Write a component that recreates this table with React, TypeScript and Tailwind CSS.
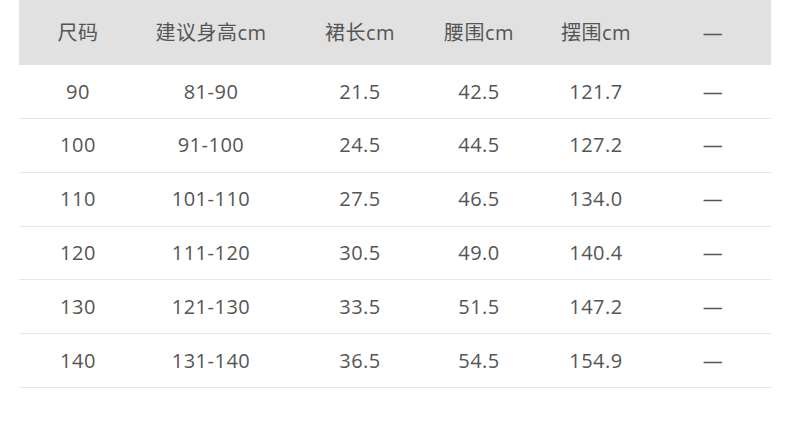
const headers = ["尺码", "建议身高cm", "裙长cm", "腰围cm", "摆围cm", "—"];

const rows = [
	["90", "81-90", "21.5", "42.5", "121.7", "—"],
	["100", "91-100", "24.5", "44.5", "127.2", "—"],
	["110", "101-110", "27.5", "46.5", "134.0", "—"],
	["120", "111-120", "30.5", "49.0", "140.4", "—"],
	["130", "121-130", "33.5", "51.5", "147.2", "—"],
	["140", "131-140", "36.5", "54.5", "154.9", "—"],
];

const gridCols = "grid grid-cols-[118px_148px_150px_88px_146px_88px]";

export default function App() {
	return (
		<div
			className="w-[790px] h-[431px] bg-white px-[19px] text-[20px] tracking-[0.5px] text-[#555555]"
			style={{ fontFamily: '"Open Sans", "Noto Sans CJK SC", sans-serif' }}
		>
			{/* HEADER */}
			<div className={`${gridCols} h-[65px] items-center bg-[#e1e1e1]`}>
				{headers.map((h, i) => (
					<div key={i} className="text-center">
						{h}
					</div>
				))}
			</div>

			{/* ROWS */}
			{rows.map((row, r) => (
				<div
					key={r}
					className={`${gridCols} items-center border-b border-[#e6e6e6] ${r === 0 ? "h-[54px]" : "h-[53.8px]"}`}
				>
					{row.map((cell, c) => (
						<div key={c} className="text-center">
							{cell}
						</div>
					))}
				</div>
			))}
		</div>
	);
}
